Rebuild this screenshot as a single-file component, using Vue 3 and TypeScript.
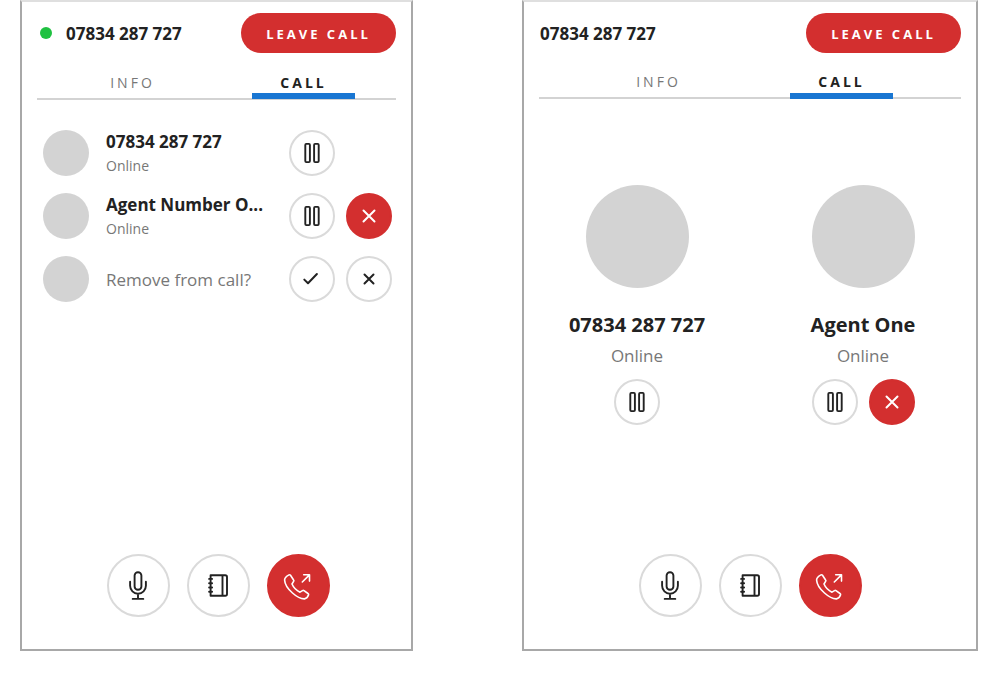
<script setup lang="ts">
import { ref } from 'vue'

type IconName = 'pause' | 'close' | 'check' | 'cross'

interface Action {
  icon: IconName
  label: string
  danger?: boolean
}

interface Participant {
  id: number
  name: string
  status?: string
  actions: Action[]
}

interface Panel {
  id: string
  layout: 'list' | 'cards'
  live: boolean
  people: Participant[]
}

const hold: Action = { icon: 'pause', label: 'Hold' }
const remove: Action = { icon: 'close', label: 'Remove', danger: true }

const panels: Panel[] = [
  {
    id: 'compact',
    layout: 'list',
    live: true,
    people: [
      { id: 1, name: '07834 287 727', status: 'Online', actions: [hold] },
      { id: 2, name: 'Agent Number O...', status: 'Online', actions: [hold, remove] },
      {
        id: 3,
        name: 'Remove from call?',
        actions: [
          { icon: 'check', label: 'Confirm' },
          { icon: 'cross', label: 'Cancel' },
        ],
      },
    ],
  },
  {
    id: 'wide',
    layout: 'cards',
    live: false,
    people: [
      { id: 1, name: '07834 287 727', status: 'Online', actions: [hold] },
      { id: 2, name: 'Agent One', status: 'Online', actions: [hold, remove] },
    ],
  },
]

const tabs = ['INFO', 'CALL']
const active = ref<Record<string, string>>({ compact: 'CALL', wide: 'CALL' })
</script>

<template>
  <main class="page">
    <section v-for="panel in panels" :key="panel.id" class="panel" :class="panel.layout">
      <header class="top">
        <span v-if="panel.live" class="dot"></span>
        <span class="number">07834 287 727</span>
        <button type="button" class="leave">LEAVE CALL</button>
      </header>

      <nav class="tabs" role="tablist">
        <button
          v-for="tab in tabs"
          :key="tab"
          type="button"
          role="tab"
          class="tab"
          :class="{ active: active[panel.id] === tab }"
          :aria-selected="active[panel.id] === tab"
          @click="active[panel.id] = tab"
        >
          {{ tab }}
        </button>
      </nav>

      <ul class="people">
        <li v-for="person in panel.people" :key="person.id" class="person">
          <span class="avatar"></span>
          <div class="who">
            <span :class="person.status ? 'name' : 'question'">{{ person.name }}</span>
            <span v-if="person.status" class="status">{{ person.status }}</span>
          </div>
          <div class="actions">
            <button
              v-for="action in person.actions"
              :key="action.icon"
              type="button"
              class="round"
              :class="{ danger: action.danger }"
              :aria-label="action.label"
            >
              <svg v-if="action.icon === 'pause'" width="24" height="24" viewBox="0 0 24 24">
                <rect x="5.3" y="2.9" width="4.6" height="18.2" rx="1" />
                <rect x="14.1" y="2.9" width="4.6" height="18.2" rx="1" />
              </svg>
              <svg v-else-if="action.icon === 'close'" width="24" height="24" viewBox="0 0 24 24">
                <path class="bold" d="M6.5 6.500 17.500 17.500M17.500 6.500 6.500 17.500" />
              </svg>
              <svg v-else-if="action.icon === 'check'" width="24" height="24" viewBox="0 0 24 24">
                <path class="bold" d="M4.300 12.600 8 16.300 16.900 7" />
              </svg>
              <svg v-else width="24" height="24" viewBox="0 0 24 24">
                <path class="bold" d="M7.500 7.500 16.500 16.500M16.500 7.500 7.500 16.500" />
              </svg>
            </button>
          </div>
        </li>
      </ul>

      <footer class="controls">
        <button type="button" class="round large" aria-label="Mute">
          <svg width="32" height="32" viewBox="0 0 32 32">
            <rect x="12.600" y="2.200" width="6.800" height="17.600" rx="3.400" />
            <path d="M8.100 11.800v4a7.900 7.900 0 0 0 15.800 0v-4M16 23.900v4.800M10.700 28.900h10.600" />
          </svg>
        </button>
        <button type="button" class="round large" aria-label="Contacts">
          <svg width="32" height="32" viewBox="0 0 32 32">
            <path d="M8.600 5.200h14.600a1.800 1.800 0 0 1 1.800 1.800v17a1.800 1.800 0 0 1-1.800 1.800H8.600zM20.500 5.200v20.600" />
            <path d="M7.100 8.900h3M7.100 13.200h3M7.100 17.500h3M7.100 21.800h3" />
          </svg>
        </button>
        <button type="button" class="round large danger" aria-label="Transfer call">
          <svg width="32" height="32" viewBox="0 0 32 32">
            <path
              class="thin"
              d="M7 4.900C5 6 2.600 7.800 2.600 10 2.800 14 6.500 19.500 10.500 23c4 3.600 9 6 12 5.900 2-.4 3.500-2.300 4.100-4.100.1-.6-.1-1-.6-1.300l-4-2.900c-.5-.3-1-.3-1.500 0L18 22.200c-3-1.400-6.500-4.700-8-8.200l1.600-2.600c.4-.4.4-.9 0-1.400L8.500 5.300c-.4-.5-.9-.7-1.500-.4z"
            />
            <path class="thin" d="M20.300 12 27.200 5.100M21.700 4.800h5.800v6.300" />
          </svg>
        </button>
      </footer>
    </section>
  </main>
</template>

<style>
body {
  margin: 0;
  background: #fff;
}
</style>

<style scoped>
.page {
  box-sizing: border-box;
  min-height: 100vh;
  padding: 0 22px 22px 20px;
  display: grid;
  grid-template-columns: 393fr 456fr;
  column-gap: 109px;
  font-family: 'Open Sans', 'Noto Sans', sans-serif;
  color: #222;
}

button {
  font-family: inherit;
  padding: 0;
  cursor: pointer;
}

.panel {
  min-width: 0;
  display: flex;
  flex-direction: column;
  border: 2px solid #a8a8a8;
  border-top-color: #dfdfdf;
}

.top {
  display: flex;
  align-items: center;
  padding: 11px 15px 0;
}

.cards .top {
  padding-left: 16px;
}

.dot {
  width: 12px;
  height: 12px;
  margin: 0 14px 0 3px;
  border-radius: 50%;
  background: #1fc141;
}

.number {
  padding-top: 2px;
  font-size: 17px;
  line-height: 24px;
  font-weight: 700;
}

.leave {
  width: 155px;
  height: 40px;
  margin-left: auto;
  padding-top: 2px;
  border: 0;
  border-radius: 20px;
  background: #d32f2f;
  color: #fff;
  font-size: 13px;
  font-weight: 700;
  letter-spacing: 3px;
}

.tabs {
  display: flex;
  justify-content: center;
  gap: 68px;
  margin: 17px 15px 0;
  padding-left: 3px;
  border-bottom: 2px solid #d3d3d3;
}

.cards .tabs {
  gap: 80px;
  padding-left: 0;
  margin-top: 16px;
}

.tab {
  box-sizing: border-box;
  width: 103px;
  height: 29px;
  margin-bottom: -1px;
  padding-top: 2px;
  border: 0;
  border-bottom: 6px solid transparent;
  background: none;
  color: #777;
  font-size: 14px;
  line-height: 20px;
  letter-spacing: 3px;
}

.cards .tab {
  height: 30px;
  margin-bottom: -2px;
}

.tab.active {
  border-bottom-color: #1976d2;
  color: #222;
  font-weight: 700;
}

.people {
  flex: 1;
  margin: 0;
  padding: 30px 19px 0 21px;
  list-style: none;
}

.person {
  display: flex;
  align-items: center;
}

.list .person {
  height: 46px;
  margin-bottom: 17px;
}

.avatar {
  flex: none;
  width: 46px;
  height: 46px;
  border-radius: 50%;
  background: #d3d3d3;
}

.who {
  flex: 1;
  min-width: 0;
  display: flex;
  flex-direction: column;
  margin: 0 17px;
  padding-top: 2px;
}

.name {
  white-space: nowrap;
  font-size: 17px;
  line-height: 24px;
  font-weight: 700;
}

.status {
  font-size: 14px;
  line-height: 24px;
  color: #777;
}

.question {
  white-space: nowrap;
  font-size: 17px;
  line-height: 24px;
  color: #777;
}

.actions {
  display: flex;
  gap: 11px;
}

.list .actions {
  width: 103px;
}

.cards .people {
  display: grid;
  grid-template-columns: 1fr 1fr;
  align-content: start;
  padding: 86px 0 0;
}

.cards .person {
  flex-direction: column;
}

.cards .avatar {
  width: 103px;
  height: 103px;
}

.cards .who {
  flex: none;
  align-items: center;
  margin: 20px 0 8px;
}

.cards .name {
  font-size: 20px;
  line-height: 30px;
}

.cards .status {
  font-size: 17px;
  line-height: 31px;
}

.round {
  box-sizing: border-box;
  flex: none;
  display: flex;
  align-items: center;
  justify-content: center;
  width: 46px;
  height: 46px;
  border: 2px solid #dadada;
  border-radius: 50%;
  background: #fff;
  color: #222;
}

.round.large {
  width: 63px;
  height: 63px;
}

.round.danger {
  border-color: #d32f2f;
  background: #d32f2f;
  color: #fff;
}

.round svg {
  flex: none;
  fill: none;
  stroke: currentColor;
  stroke-width: 1.9;
  stroke-linecap: round;
  stroke-linejoin: round;
}

.round .bold {
  stroke-width: 2;
}

.round .thin {
  stroke-width: 1.6;
}

.controls {
  display: flex;
  justify-content: center;
  gap: 17px;
  padding: 0 0 32px;
}

.list .controls {
  padding-left: 3px;
}
</style>
